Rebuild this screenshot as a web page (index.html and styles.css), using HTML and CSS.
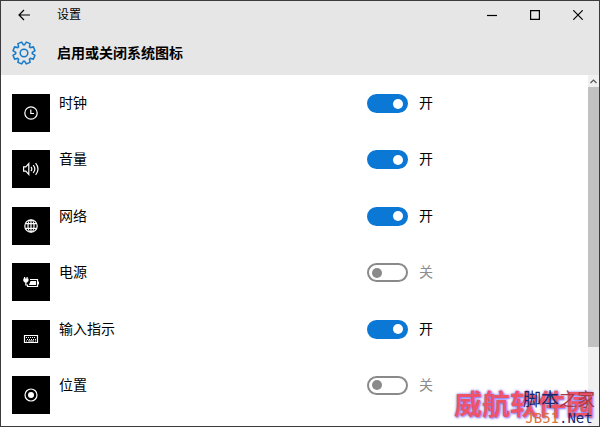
FILE: index.html
```html
<!DOCTYPE html>
<html lang="zh-CN">
<head>
  <meta charset="UTF-8">
  <meta name="viewport" content="width=device-width, initial-scale=1.0">
  <title>设置</title>
  <link rel="stylesheet" href="styles.css">
</head>
<body>

  <div class="window">
    <header class="header">
      <div class="titlebar">
        <button class="win-btn back" aria-label="返回">
          <svg width="12" height="12" viewBox="0 0 12 12"><path d="M12 6H1M6 1L1 6l5 5"/></svg>
        </button>
        <span class="app-name">设置</span>
        <button class="win-btn" aria-label="最小化">
          <svg width="10" height="10" viewBox="0 0 10 10"><path d="M0 5.5h10"/></svg>
        </button>
        <button class="win-btn" aria-label="最大化">
          <svg width="10" height="10" viewBox="0 0 10 10"><path d="M.6.6h8.8v8.8H.6z"/></svg>
        </button>
        <button class="win-btn" aria-label="关闭">
          <svg width="10" height="10" viewBox="0 0 10 10"><path d="M.3.3l9.4 9.4M9.7.3L.3 9.7"/></svg>
        </button>
      </div>
      <div class="heading">
        <svg class="gear" width="24" height="24" viewBox="0 0 24 24">
          <path transform="rotate(22.5 12 12)" d="M9.4 4.1L10 1h4l.6 3.1 1.15.48 2.61-1.77 2.83 2.83-1.77 2.61.48 1.15L23 10v4l-3.1.6-.48 1.15 1.77 2.61-2.83 2.83-2.61-1.77-1.15.48L14 23h-4l-.6-3.1-1.15-.48-2.61 1.77-2.83-2.83 1.77-2.61-.48-1.15L1 14v-4l3.1-.6.48-1.15-1.77-2.61 2.83-2.83 2.61 1.77z"/>
          <circle cx="12" cy="12" r="3.8"/>
        </svg>
        <h1>启用或关闭系统图标</h1>
      </div>
    </header>

    <div class="content">
      <ul class="icon-list">
        <li class="row">
          <span class="tile">
            <svg width="16" height="16" viewBox="0 0 16 16"><circle cx="8" cy="8" r="6.2"/><path d="M7.8 4.5v4h3.2"/></svg>
          </span>
          <label for="clock">时钟</label>
          <input type="checkbox" class="toggle" id="clock" checked>
          <span class="state"></span>
        </li>
        <li class="row">
          <span class="tile">
            <svg width="16" height="16" viewBox="0 0 16 16"><path d="M.6 5.8h2.2L5.8 2.6v10.8L2.8 10.2H.6zM8 6c1 1.200 1 2.800 0 4M10.200 4.200c2 2.300 2 5.300 0 7.600M12.600 2.200c3 3.600 3 8 0 11.600"/></svg>
          </span>
          <label for="volume">音量</label>
          <input type="checkbox" class="toggle" id="volume" checked>
          <span class="state"></span>
        </li>
        <li class="row">
          <span class="tile">
            <svg width="16" height="16" viewBox="0 0 16 16"><circle cx="8" cy="8" r="6.200"/><ellipse cx="8" cy="8" rx="3" ry="6"/><path d="M8 2v12M2.700 5.600h10.600M2.700 10.400h10.600"/></svg>
          </span>
          <label for="network">网络</label>
          <input type="checkbox" class="toggle" id="network" checked>
          <span class="state"></span>
        </li>
        <li class="row">
          <span class="tile">
            <svg width="16" height="16" viewBox="0 0 16 16"><path d="M7 5.500h7.500v7H4.500v-2M15.500 7.500v3M2.800 8.500v2.500h1.700"/><path class="solid" d="M1 3h1.200v1.500h1.300V3h1.200v1.500h.8v2.500L3.800 8.800H2L.3 7V4.500H1zM7.500 7h5.500v4H6z"/></svg>
          </span>
          <label for="power">电源</label>
          <input type="checkbox" class="toggle" id="power">
          <span class="state"></span>
        </li>
        <li class="row">
          <span class="tile">
            <svg width="16" height="16" viewBox="0 0 16 16"><path d="M1.500 4.500h13v7h-13z"/><path d="M3 6.500h10M4 8.500h9" stroke-dasharray="1 1"/><path d="M3 10h1M5 10h6M12 10h1"/></svg>
          </span>
          <label for="ime">输入指示</label>
          <input type="checkbox" class="toggle" id="ime" checked>
          <span class="state"></span>
        </li>
        <li class="row">
          <span class="tile">
            <svg width="16" height="16" viewBox="0 0 16 16"><circle cx="8" cy="8" r="6"/><circle class="solid" cx="8" cy="8" r="3"/></svg>
          </span>
          <label for="location">位置</label>
          <input type="checkbox" class="toggle" id="location">
          <span class="state"></span>
        </li>
      </ul>
      <div class="scrollbar">
        <button class="scroll-up" aria-label="向上滚动">
          <svg width="7" height="5" viewBox="0 0 7 5"><path d="M.5 4l3-3 3 3"/></svg>
        </button>
        <div class="thumb"></div>
      </div>
    </div>

    <div class="mark mark-big">威航软件园</div>
    <div class="mark mark-site">
      <div class="site-name">脚本<span>之家</span></div>
      <div class="site-url"><span>JB51</span>.Net</div>
    </div>
  </div>

</body>
</html>
```
FILE: styles.css
```css
* { box-sizing: border-box; }
body { margin: 0; font-family: "Liberation Sans", "Noto Sans CJK SC", sans-serif; color: #000; background: #fff; }
button { padding: 0; border: none; background: none; }
svg { display: block; fill: none; stroke: currentColor; stroke-width: 1.2; }

.window { position: relative; display: flex; flex-direction: column; min-height: 100vh; border: 1px solid #3c3a3d; }

/* title bar and heading */
.header { background: #e6e6e6; height: 74px; }
.titlebar { display: flex; align-items: center; height: 28px; }
.app-name { flex: 1; padding-left: 11px; font-size: 12px; line-height: 28px; }
.win-btn { display: flex; align-items: center; justify-content: center; width: 43px; height: 28px; color: #000; }
.win-btn.back { width: 45px; }
.heading { display: flex; align-items: center; gap: 21px; height: 48px; padding: 0 11px; }
.heading h1 { margin: 0; font-size: 14px; line-height: 20px; }
.gear { color: #1479c9; stroke-width: 1.5; }

/* list of system icons */
.content { display: flex; flex: 1; }
.icon-list { display: flex; flex: 1; flex-direction: column; justify-content: space-between; gap: 8px; margin: 0; padding: 19px 11px 12px; list-style: none; }
.row { display: grid; grid-template-columns: 38px 317px 41px 1fr; font-size: 14px; line-height: 19px; }
.row label { padding-left: 9px; }
.tile { display: flex; align-items: center; justify-content: center; width: 38px; height: 38px; background: #000; color: #fff; }
.solid { fill: currentColor; stroke: none; }

.toggle { appearance: none; display: flex; align-items: center; width: 41px; height: 19px; margin: 0; padding: 0 3px; border: 2px solid #8a8a8a; border-radius: 10px; background: #fff; }
.toggle::before { content: ""; width: 10px; height: 10px; border-radius: 50%; background: #8a8a8a; }
.toggle:checked { justify-content: flex-end; border-color: #0a78d4; background: #0a78d4; }
.toggle:checked::before { background: #fff; }
.state { padding-left: 11px; color: #8c8c8c; }
.state::before { content: "关"; }
.toggle:checked + .state { color: #000; }
.toggle:checked + .state::before { content: "开"; }

.scrollbar { width: 11px; background: #f0f0f0; }
.scroll-up { display: flex; align-items: center; justify-content: center; width: 11px; height: 12px; color: #555; }
.thumb { height: 74%; background: #c1c1c1; }

/* site marks over the corner */
.mark { position: absolute; white-space: nowrap; }
.mark-big { right: 5px; bottom: 3px; font-size: 28px; font-weight: bold; line-height: 34px; color: #ee5468; text-shadow: 0 0 3px #7d6cf0, 1px 1px 2px #a58cf5; }
.mark-site { right: 4px; bottom: 0; color: #17286f; }
.site-name { font-size: 18px; line-height: 20px; }
.site-name span { color: #a83a48; }
.site-url { font-family: "DejaVu Sans Mono", monospace; font-size: 14px; line-height: 16px; text-align: center; }
.site-url span { color: #d8703c; }
```
